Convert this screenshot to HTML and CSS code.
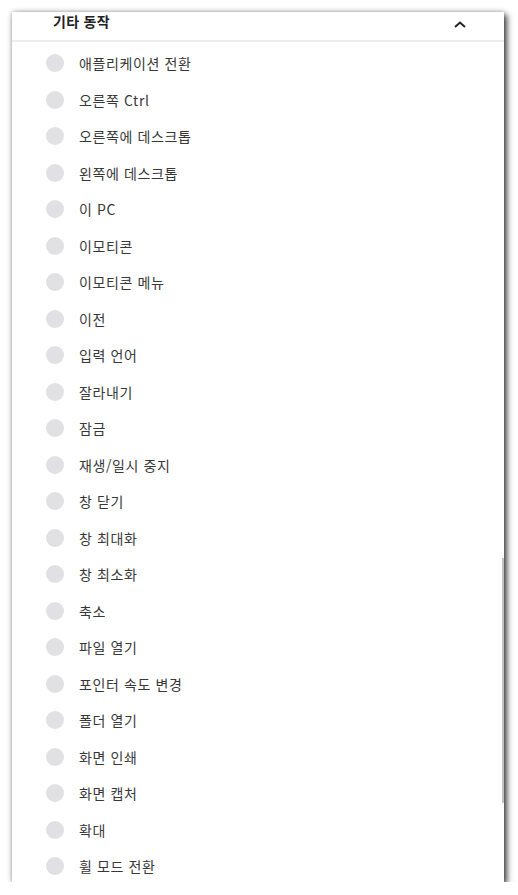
FILE: index.html
```html
<!DOCTYPE html>
<html lang="ko">
<head>
<meta charset="utf-8">
<title>기타 동작</title>
<link rel="stylesheet" href="styles.css">
</head>
<body>
<div class="panel">
  <div class="header">
    <span class="title">기타 동작</span>
    <svg class="chevron" width="12" height="7" viewBox="0 0 12 7"><path d="M1 6 L6 1.5 L11 6" fill="none" stroke="#222" stroke-width="2"/></svg>
  </div>
  <ul class="list">
    <li class="row"><span class="radio"></span><span class="label">애플리케이션 전환</span></li>
    <li class="row"><span class="radio"></span><span class="label">오른쪽 Ctrl</span></li>
    <li class="row"><span class="radio"></span><span class="label">오른쪽에 데스크톱</span></li>
    <li class="row"><span class="radio"></span><span class="label">왼쪽에 데스크톱</span></li>
    <li class="row"><span class="radio"></span><span class="label">이 PC</span></li>
    <li class="row"><span class="radio"></span><span class="label">이모티콘</span></li>
    <li class="row"><span class="radio"></span><span class="label">이모티콘 메뉴</span></li>
    <li class="row"><span class="radio"></span><span class="label">이전</span></li>
    <li class="row"><span class="radio"></span><span class="label">입력 언어</span></li>
    <li class="row"><span class="radio"></span><span class="label">잘라내기</span></li>
    <li class="row"><span class="radio"></span><span class="label">잠금</span></li>
    <li class="row"><span class="radio"></span><span class="label">재생/일시 중지</span></li>
    <li class="row"><span class="radio"></span><span class="label">창 닫기</span></li>
    <li class="row"><span class="radio"></span><span class="label">창 최대화</span></li>
    <li class="row"><span class="radio"></span><span class="label">창 최소화</span></li>
    <li class="row"><span class="radio"></span><span class="label">축소</span></li>
    <li class="row"><span class="radio"></span><span class="label">파일 열기</span></li>
    <li class="row"><span class="radio"></span><span class="label">포인터 속도 변경</span></li>
    <li class="row"><span class="radio"></span><span class="label">폴더 열기</span></li>
    <li class="row"><span class="radio"></span><span class="label">화면 인쇄</span></li>
    <li class="row"><span class="radio"></span><span class="label">화면 캡처</span></li>
    <li class="row"><span class="radio"></span><span class="label">확대</span></li>
    <li class="row"><span class="radio"></span><span class="label">휠 모드 전환</span></li>
  </ul>
  <div class="thumb"></div>
</div>
</body>
</html>
```
FILE: styles.css
```css
html, body {
  margin: 0;
  padding: 0;
  background: #ffffff;
}
body {
  font-family: "Noto Sans CJK KR", "Noto Sans", sans-serif;
}
.panel {
  position: relative;
  margin: 12px 0 0 12px;
  width: 492px;
  height: 870px;
  overflow: hidden;
  background: #ffffff;
  box-shadow: 3px 3px 6px rgba(0, 0, 0, 0.7), 0 0 5px rgba(0, 0, 0, 0.3);
}
.header {
  height: 28px;
  border-bottom: 2px solid #ededed;
  display: flex;
  justify-content: space-between;
  align-items: flex-start;
  padding: 0 38px 0 41px;
}
.title {
  font-size: 14px;
  font-weight: 700;
  letter-spacing: 0.3px;
  line-height: 18px;
  color: #222;
}
.chevron {
  margin-top: 9px;
}
.list {
  list-style: none;
  margin: 0;
  padding: 2.75px 0 0 0;
}
.row {
  height: 36.5px;
  display: flex;
  align-items: center;
  padding-left: 34px;
  gap: 15px;
}
.radio {
  width: 18px;
  height: 18px;
  border-radius: 50%;
  background: #e1e1e3;
  flex: none;
}
.label {
  font-size: 14px;
  letter-spacing: 0.6px;
  color: #383838;
  line-height: 18px;
}
.thumb {
  position: absolute;
  right: 0;
  top: 546px;
  width: 2px;
  height: 245px;
  background: #c4c4c4;
}
```
